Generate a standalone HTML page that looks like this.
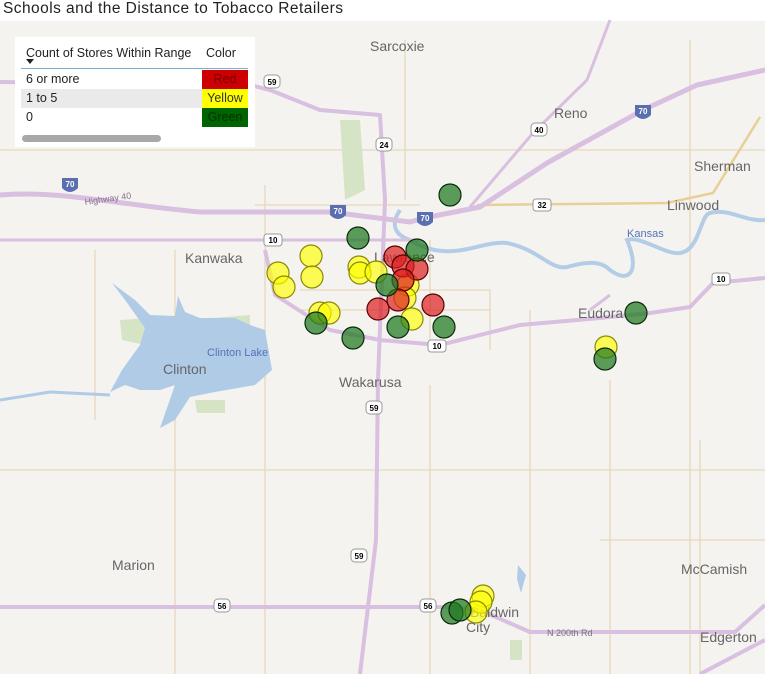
<!DOCTYPE html>
<html><head><meta charset="utf-8"><style>
html,body{margin:0;padding:0;width:765px;height:674px;overflow:hidden;background:#fff;font-family:"Liberation Sans",sans-serif}
#title{position:absolute;left:3px;top:0;font-size:15.5px;color:#222;letter-spacing:0.45px}
svg{position:absolute;left:0;top:0}
#leg{position:absolute;left:15px;top:37px;width:240px;height:110px;background:#fff;font-size:12.5px;color:#222}
.row{position:absolute;left:6px;width:227px;height:19px;line-height:19px}
.sw{position:absolute;left:181px;width:46px;height:19px;text-align:center;font-size:12.5px}
</style></head><body>
<div id="title">Schools and the Distance to Tobacco Retailers</div>
<svg width="765" height="674" viewBox="0 0 765 674">
<rect x="0" y="21" width="765" height="653" fill="#f5f3f0"/>
<g fill="none" stroke="#e6d8b8" stroke-width="1.3">
<path d="M0 150 L765 150"/><path d="M265 185 V674"/><path d="M175 250 V674"/><path d="M95 250 V420"/><path d="M610 380 V674"/><path d="M690 40 V674"/>
<path d="M0 470 H765"/><path d="M430 385 V674"/><path d="M530 310 V674"/><path d="M700 440 V674"/><path d="M300 290 H490 V350"/><path d="M300 310 H490"/><path d="M430 240 V350"/><path d="M255 205 H420"/><path d="M405 40 V200"/><path d="M600 540 H765"/>
</g>
<path d="M477 205 L667 203 L713 193 L760 117" fill="none" stroke="#e8cf98" stroke-width="2.5"/>
<g fill="#d6e4c6"><path d="M340 120 L360 120 L365 190 L345 200 Z"/><path d="M510 640 h12 v20 h-12z"/><path d="M120 320 L150 318 L145 345 L122 340Z"/><path d="M185 320 L250 315 L250 335 L200 340Z"/><path d="M165 345 L210 350 L225 372 L200 378 L170 365Z"/><path d="M195 400 L225 400 L225 413 L197 413Z"/></g>
<path d="M410 240 C450 265 480 240 507 243 C540 250 550 270 567 267 C585 262 600 260 610 270 C630 285 640 270 627 240 C640 235 665 255 680 253 C700 250 700 215 710 213 C730 208 745 222 765 220" fill="none" stroke="#b4cde6" stroke-width="4"/>
<path d="M410 240 C395 235 390 225 400 210" fill="none" stroke="#b4cde6" stroke-width="4"/>
<path d="M112 283 L135 300 L150 315 L175 316 L178 296 L185 312 L200 318 L235 318 L250 325 L265 330 L272 370 L255 385 L215 392 L190 397 L175 420 L160 428 L168 405 L175 385 L160 390 L140 390 L125 385 L110 392 L122 370 L140 345 L145 328 L125 300 Z" fill="#b0cbe6"/>
<path d="M0 400 L50 392 L110 395" fill="none" stroke="#b0cbe6" stroke-width="3"/>
<path d="M518 565 l8 10 l-5 18 l-4 -14z" fill="#b0cbe6"/>
<g fill="none" stroke="#d9bfe0" stroke-linejoin="round">
<path d="M0 195 C60 190 120 205 200 212 L330 212 L410 222 L424 218 L480 207 L547 163 L643 110 L697 85 L765 70" stroke-width="5"/>
<path d="M470 207 L533 133 L587 80 L610 20" stroke-width="3"/>
<path d="M0 82 L250 85 L270 90 L320 110 L380 115 L385 200 L378 380 L376 540 L360 674" stroke-width="4"/>
<path d="M0 240 H420" stroke-width="3"/>
<path d="M265 250 L275 295 L330 330 L380 340 L440 345 L520 325 L600 318 L650 313 L690 307 L713 283 L765 278" stroke-width="4"/>
<path d="M0 607 L450 607 L480 610 L530 632 L735 632 L765 605" stroke-width="4"/>
<path d="M590 310 L610 295" stroke-width="3"/>
<path d="M700 674 L765 640" stroke-width="4"/>
</g>
<g font-family="Liberation Sans,sans-serif" fill="#666" font-size="14">
<text x="370" y="51">Sarcoxie</text><text x="554" y="118">Reno</text><text x="694" y="171">Sherman</text><text x="667" y="210">Linwood</text>
<text x="185" y="263">Kanwaka</text><text x="578" y="318">Eudora</text><text x="163" y="374">Clinton</text><text x="339" y="387">Wakarusa</text>
<text x="112" y="570">Marion</text><text x="681" y="574">McCamish</text><text x="700" y="642">Edgerton</text><text x="470" y="617">Baldwin</text><text x="466" y="632">City</text>
<text x="374" y="262">Lawrence</text>
<text x="207" y="356" font-size="11" fill="#5572b8">Clinton Lake</text><text x="627" y="237" font-size="11" fill="#5572b8">Kansas</text>
<text x="547" y="636" font-size="9" fill="#777">N 200th Rd</text>
<text x="85" y="205" font-size="9" fill="#8a7090" transform="rotate(-8 85 205)">Highway 40</text>
</g>
<g font-family="Liberation Sans,sans-serif" font-size="8" font-weight="bold" text-anchor="middle">
<rect x="264" y="234" width="18" height="12" rx="3" fill="#fff" stroke="#999"/><text x="273" y="243">10</text>
<rect x="428" y="340" width="18" height="12" rx="3" fill="#fff" stroke="#999"/><text x="437" y="349">10</text>
<rect x="712" y="273" width="18" height="12" rx="3" fill="#fff" stroke="#999"/><text x="721" y="282">10</text>
<rect x="533" y="199" width="18" height="12" rx="3" fill="#fff" stroke="#999"/><text x="542" y="208">32</text>
<rect x="531" y="123" width="16" height="13" rx="4" fill="#fff" stroke="#999"/><text x="539" y="133">40</text>
<rect x="376" y="138" width="16" height="13" rx="4" fill="#fff" stroke="#999"/><text x="384" y="148">24</text>
<rect x="264" y="75" width="16" height="13" rx="4" fill="#fff" stroke="#999"/><text x="272" y="85">59</text>
<rect x="351" y="549" width="16" height="13" rx="4" fill="#fff" stroke="#999"/><text x="359" y="559">59</text>
<rect x="366" y="401" width="16" height="13" rx="4" fill="#fff" stroke="#999"/><text x="374" y="411">59</text>
<rect x="214" y="599" width="16" height="13" rx="4" fill="#fff" stroke="#999"/><text x="222" y="609">56</text>
<rect x="420" y="599" width="16" height="13" rx="4" fill="#fff" stroke="#999"/><text x="428" y="609">56</text>
<g fill="#fff"><path d="M62 178 h16 v10 q-8 8 -16 0z" fill="#5a6fb0"/><text x="70" y="187">70</text>
<path d="M330 205 h16 v10 q-8 8 -16 0z" fill="#5a6fb0"/><text x="338" y="214">70</text>
<path d="M417 212 h16 v10 q-8 8 -16 0z" fill="#5a6fb0"/><text x="425" y="221">70</text>
<path d="M635 105 h16 v10 q-8 8 -16 0z" fill="#5a6fb0"/><text x="643" y="114">70</text></g>
</g>
<g stroke-width="1.2">
<g fill="rgba(255,255,0,0.65)" stroke="#8a8a00">
<circle cx="311" cy="256" r="11"/><circle cx="278" cy="273" r="11"/><circle cx="284" cy="287" r="11"/><circle cx="312" cy="277" r="11"/>
<circle cx="359" cy="267" r="11"/><circle cx="360" cy="273" r="11"/><circle cx="376" cy="272" r="11"/><circle cx="408" cy="285" r="11"/><circle cx="405" cy="298" r="11"/>
<circle cx="320" cy="313" r="11"/><circle cx="329" cy="313" r="11"/><circle cx="412" cy="319" r="11"/>
<circle cx="606" cy="347" r="11"/><circle cx="483" cy="596" r="11"/><circle cx="481" cy="602" r="11"/><circle cx="476" cy="612" r="11"/>
</g>
<g fill="rgba(220,30,30,0.7)" stroke="#5a0000">
<circle cx="395" cy="257" r="11"/><circle cx="403" cy="266" r="11"/><circle cx="417" cy="269" r="11"/><circle cx="403" cy="280" r="11"/>
<circle cx="398" cy="300" r="11"/><circle cx="378" cy="309" r="11"/><circle cx="433" cy="305" r="11"/>
</g>
<g fill="rgba(30,120,30,0.72)" stroke="#0a2a0a">
<circle cx="450" cy="195" r="11"/><circle cx="358" cy="238" r="11"/><circle cx="417" cy="250" r="11"/><circle cx="387" cy="285" r="11"/>
<circle cx="316" cy="323" r="11"/><circle cx="398" cy="327" r="11"/><circle cx="444" cy="327" r="11"/><circle cx="353" cy="338" r="11"/>
<circle cx="636" cy="313" r="11"/><circle cx="605" cy="359" r="11"/><circle cx="452" cy="613" r="11"/><circle cx="460" cy="610" r="11"/>
</g>
</g>
</svg>
<div id="leg">
<div style="position:absolute;left:11px;top:9px">Count of Stores Within Range</div>
<div style="position:absolute;left:191px;top:9px">Color</div>
<div style="position:absolute;left:11px;top:22px;width:0;height:0;border-left:4px solid transparent;border-right:4px solid transparent;border-top:5px solid #222"></div>
<div style="position:absolute;left:6px;top:31px;width:227px;height:1px;background:#7aaed0"></div>
<div class="row" style="top:33px"><span style="margin-left:5px">6 or more</span><div class="sw" style="top:0;background:#cc0000;color:#7a0000">Red</div></div>
<div class="row" style="top:52px;background:#eaeaea"><span style="margin-left:5px">1 to 5</span><div class="sw" style="top:0;background:#ffff00;color:#333">Yellow</div></div>
<div class="row" style="top:71px"><span style="margin-left:5px">0</span><div class="sw" style="top:0;background:#006400;color:#003300">Green</div></div>
<div style="position:absolute;left:7px;top:98px;width:139px;height:7px;border-radius:4px;background:#a8a8a8"></div>
</div>
</body></html>
